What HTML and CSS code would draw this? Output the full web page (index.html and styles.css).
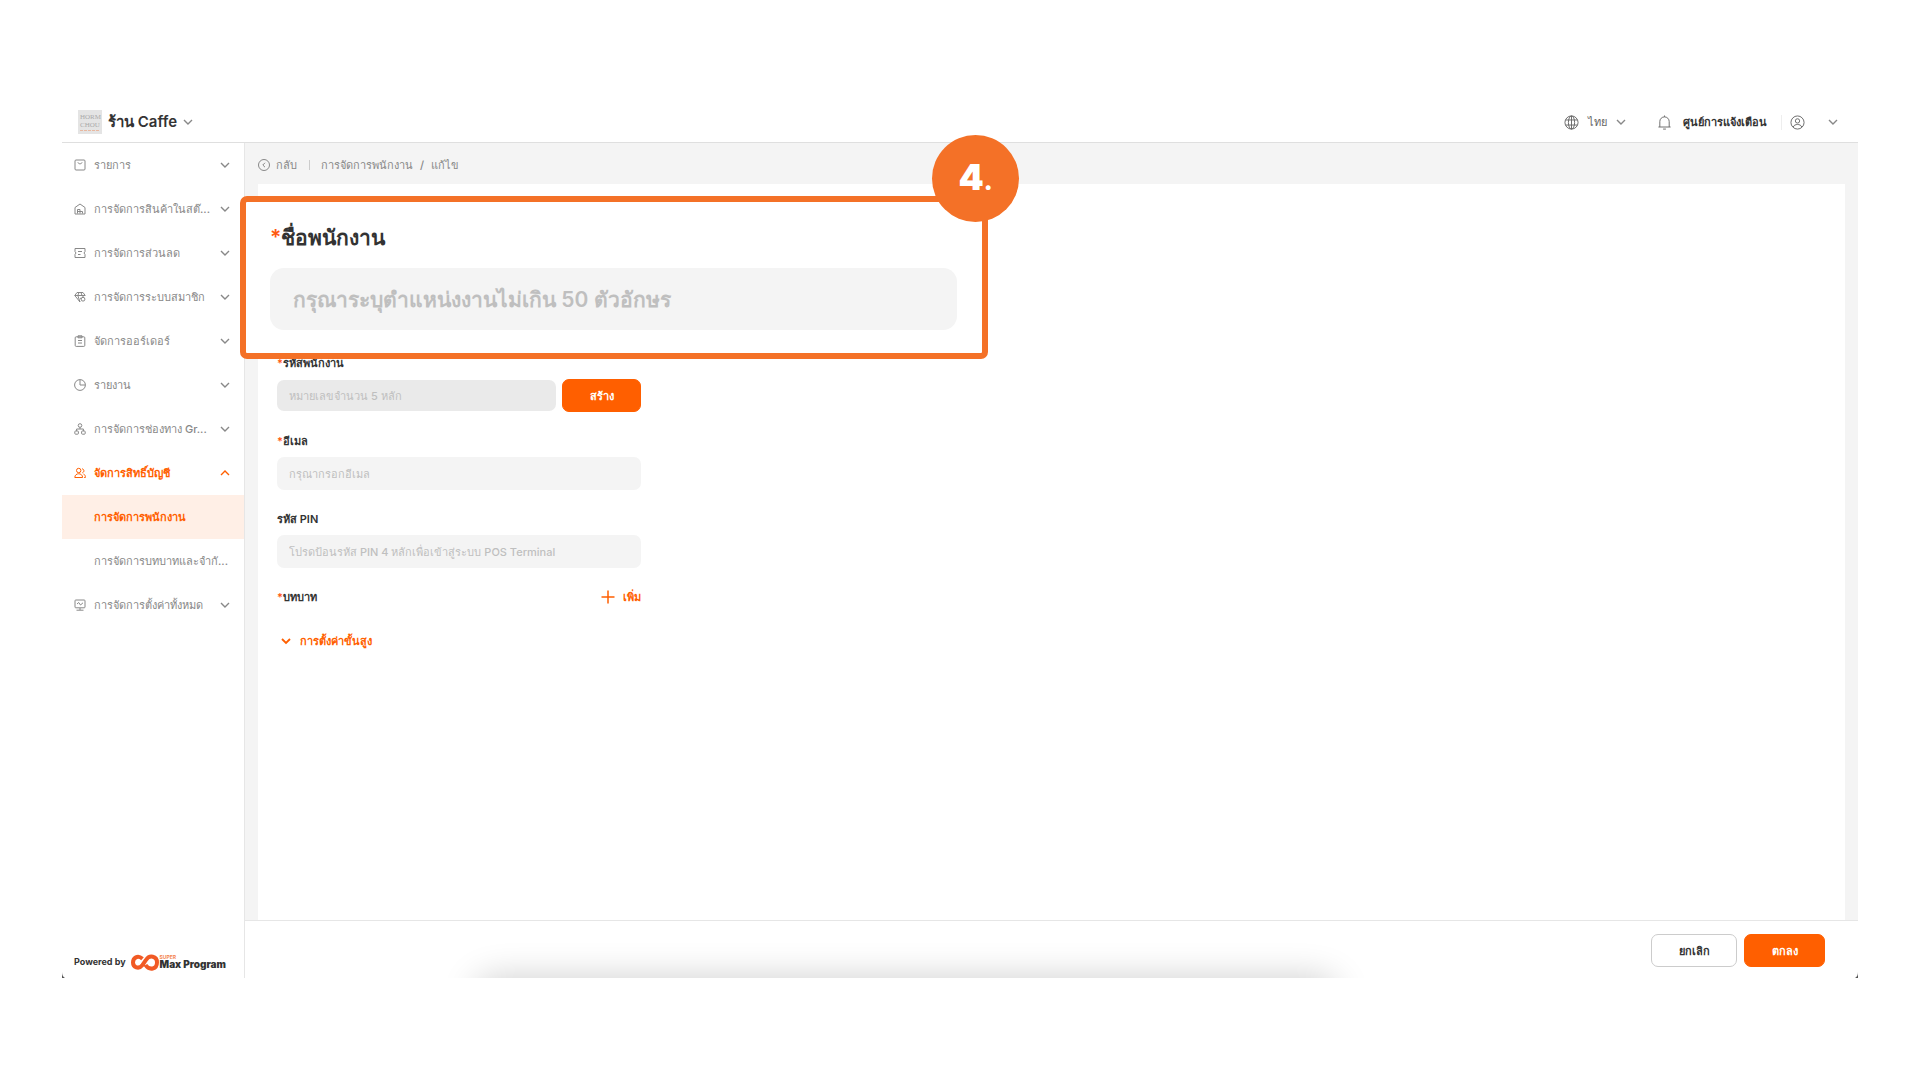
FILE: index.html
```html
<!DOCTYPE html>
<html lang="th">
<head>
    <meta charset="UTF-8">
    <meta name="viewport" content="width=device-width, initial-scale=1.0">
    <title>การจัดการพนักงาน - ร้าน Caffe</title>
    <link rel="stylesheet" href="styles.css">
</head>
<body>
    <!-- Shared icons -->
    <svg class="sprite" aria-hidden="true">
        <symbol id="chevron" viewBox="0 0 10 10"><path d="M1 3l4 4 4-4"/></symbol>
    </svg>

    <div class="window">
        <header class="topbar">
            <button class="shop" type="button">
                <svg class="shop-logo" viewBox="0 0 24 24">
                    <rect width="24" height="24" fill="#e4e4e4" stroke="none"/>
                    <text x="2" y="9">HORM</text>
                    <text x="2" y="17">CHOU</text>
                    <path d="M2 20.500h20" stroke="#e8b8a0" stroke-dasharray="3 1"/>
                </svg>
                <span>ร้าน Caffe</span>
                <svg class="chevron"><use href="#chevron"/></svg>
            </button>
            <div class="tools">
                <button class="tool language" type="button">
                    <svg class="icon-lg" viewBox="0 0 16 16"><circle cx="8" cy="8" r="7"/><ellipse cx="8" cy="8" rx="3.300" ry="7"/><path d="M1.900 5.300h12.200M1.900 10.700h12.200M8 1v14"/></svg>
                    <span>ไทย</span>
                    <svg class="chevron"><use href="#chevron"/></svg>
                </button>
                <button class="tool alerts" type="button">
                    <svg class="icon-lg" viewBox="0 0 16 16"><path d="M1.500 12.800h13M3 12.800V7a5 5 0 0 1 10 0v5.800M8 2V.5M6.500 15h3"/></svg>
                    <span>ศูนย์การแจ้งเตือน</span>
                </button>
                <button class="tool account" type="button" aria-label="บัญชี">
                    <svg class="icon-lg" viewBox="0 0 16 16"><circle cx="8" cy="8" r="7"/><circle cx="8" cy="6.300" r="2.300"/><path d="M3.500 12.800c1-3.600 8-3.600 9 0"/></svg>
                    <svg class="chevron"><use href="#chevron"/></svg>
                </button>
            </div>
        </header>

        <div class="body">
            <aside class="sidebar">
                <nav class="menu">
                    <button class="menu-item" type="button">
                        <svg class="icon" viewBox="0 0 12 12"><rect x="1" y="1" width="10" height="10" rx="1"/><path d="M4 3.300c0 2 4 2 4 0"/></svg>
                        <span>รายการ</span>
                        <svg class="chevron"><use href="#chevron"/></svg>
                    </button>
                    <button class="menu-item" type="button">
                        <svg class="icon" viewBox="0 0 12 12"><path d="M1 11V4.500L6 1l5 3.500V11zM3.500 10.500V6.500H6v2h2.500v2M3.500 8.500H6v2"/></svg>
                        <span>การจัดการสินค้าในสต๊...</span>
                        <svg class="chevron"><use href="#chevron"/></svg>
                    </button>
                    <button class="menu-item" type="button">
                        <svg class="icon" viewBox="0 0 12 12"><path d="M1 1.500h10v3L10 6l1 1.500v3H1v-3L2 6 1 4.500zM4 4.500h4M4 7.500h2.500"/></svg>
                        <span>การจัดการส่วนลด</span>
                        <svg class="chevron"><use href="#chevron"/></svg>
                    </button>
                    <button class="menu-item" type="button">
                        <svg class="icon" viewBox="0 0 12 12"><path d="M6 11L.8 4.500 3 1.500h6l2.200 3M.8 4.500h10.400M6 11L3.800 4.500 5 1.500M7 1.500l1 3"/><circle cx="9" cy="8.200" r="1.900"/><path d="M9 6.300v-1.500M6 7l1.300.8"/></svg>
                        <span>การจัดการระบบสมาชิก</span>
                        <svg class="chevron"><use href="#chevron"/></svg>
                    </button>
                    <button class="menu-item" type="button">
                        <svg class="icon" viewBox="0 0 12 12"><rect x="1.200" y="1.800" width="9.600" height="9.600" rx="1"/><path d="M4 .8h4v2H4zM4 5.500h4M4 8h4"/></svg>
                        <span>จัดการออร์เดอร์</span>
                        <svg class="chevron"><use href="#chevron"/></svg>
                    </button>
                    <button class="menu-item" type="button">
                        <svg class="icon" viewBox="0 0 12 12"><circle cx="6" cy="6" r="5.400"/><path d="M6 1v5h5"/></svg>
                        <span>รายงาน</span>
                        <svg class="chevron"><use href="#chevron"/></svg>
                    </button>
                    <button class="menu-item" type="button">
                        <svg class="icon" viewBox="0 0 12 12"><circle cx="6" cy="2.500" r="1.800"/><rect x=".8" y="8" width="3.600" height="3.200" rx=".8"/><rect x="7.600" y="8" width="3.600" height="3.200" rx=".8"/><path d="M6 4.200V6M2.600 8V6h6.800v2"/></svg>
                        <span>การจัดการช่องทาง Gr...</span>
                        <svg class="chevron"><use href="#chevron"/></svg>
                    </button>
                    <button class="menu-item open" type="button" aria-expanded="true">
                        <svg class="icon" viewBox="0 0 12 12"><circle cx="4.700" cy="3.500" r="2.200"/><path d="M.8 10.500c0-5 7.800-5 7.800 0zM8 1.800c2.500.3 2.500 3.500.3 4M9.500 7c1.400.6 1.900 1.800 1.900 3.500h-1.200"/></svg>
                        <span>จัดการสิทธิ์บัญชี</span>
                        <svg class="chevron"><use href="#chevron"/></svg>
                    </button>
                    <a class="menu-sub active" href="#staff">การจัดการพนักงาน</a>
                    <a class="menu-sub" href="#roles">การจัดการบทบาทและจำกั...</a>
                    <button class="menu-item" type="button">
                        <svg class="icon" viewBox="0 0 12 12"><rect x="1" y="1" width="10" height="7.800" rx=".8"/><path d="M3 5l1.700-1.500L6.500 6 9 3.800M6 9v2M2.500 11.200h7"/></svg>
                        <span>การจัดการตั้งค่าทั้งหมด</span>
                        <svg class="chevron"><use href="#chevron"/></svg>
                    </button>
                </nav>
                <div class="powered">
                    <span>Powered by</span>
                    <svg class="brand-mark" viewBox="0 0 28 17"><path d="M11.500 4.800C6.500.5 2 4 2 8.500s5.500 7.500 9.500 2.500l3.500-5c3.500-5.500 11-4 11 2.500s-7.500 8.500-11.500 2.500"/></svg>
                    <span class="brand"><small>SUPER</small><b>Max Program</b></span>
                </div>
            </aside>

            <main class="main">
                <div class="crumbs">
                    <a class="back" href="#back">
                        <svg class="icon" viewBox="0 0 12 12"><circle cx="6" cy="6" r="5.500"/><path d="M7 3.800L4.800 6 7 8.200"/></svg>
                        กลับ
                    </a>
                    <a class="crumb" href="#staff">การจัดการพนักงาน</a>
                    <span>/</span>
                    <span>แก้ไข</span>
                </div>

                <section class="panel">
                    <form class="form" id="staff-form">
                        <div class="field">
                            <label for="code"><i>*</i>รหัสพนักงาน</label>
                            <div class="code-row">
                                <input id="code" type="text" placeholder="หมายเลขจำนวน 5 หลัก" disabled>
                                <button class="btn primary" type="button">สร้าง</button>
                            </div>
                        </div>
                        <div class="field">
                            <label for="email"><i>*</i>อีเมล</label>
                            <input id="email" type="email" placeholder="กรุณากรอกอีเมล">
                        </div>
                        <div class="field">
                            <label for="pin">รหัส PIN</label>
                            <input id="pin" type="text" placeholder="โปรดป้อนรหัส PIN 4 หลักเพื่อเข้าสู่ระบบ POS Terminal">
                        </div>
                        <div class="role-row">
                            <span class="role-label"><i>*</i>บทบาท</span>
                            <button class="link-btn add" type="button">
                                <svg viewBox="0 0 14 14"><path d="M7 .5v13M.5 7h13"/></svg>
                                เพิ่ม
                            </button>
                        </div>
                        <button class="link-btn advanced" type="button">
                            <svg class="chevron"><use href="#chevron"/></svg>
                            การตั้งค่าขั้นสูง
                        </button>
                    </form>

                    <!-- Enlarged name field, step 4 of the guide -->
                    <div class="callout">
                        <label for="name"><i>*</i>ชื่อพนักงาน</label>
                        <input id="name" type="text" form="staff-form" placeholder="กรุณาระบุตำแหน่งงานไม่เกิน 50 ตัวอักษร">
                        <div class="step">4<span>.</span></div>
                    </div>
                </section>

                <footer class="actions">
                    <button class="btn" type="button">ยกเลิก</button>
                    <button class="btn primary" type="submit" form="staff-form">ตกลง</button>
                </footer>
            </main>
        </div>
        <div class="dock-shadow"></div>
        <svg class="corner" viewBox="0 0 4 8"><path d="M0 2c0 3 1 5 3 6H0z"/></svg>
        <svg class="corner right" viewBox="0 0 4 8"><path d="M0 2c0 3 1 5 3 6H0z"/></svg>
    </div>
</body>
</html>
```
FILE: styles.css
```css
* {
    box-sizing: border-box;
}

body {
    margin: 0;
    min-height: 100vh;
    padding: 102px 62px;
    display: flex;
    background: #fff;
    color: #333;
    font-family: Inter, "Liberation Serif", serif;
    font-size: 11px;
    line-height: 20px;
}

button,
input {
    font: inherit;
    color: inherit;
}

button {
    border: 0;
    padding: 0;
    background: none;
    cursor: pointer;
}

a {
    color: inherit;
    text-decoration: none;
}

i {
    color: #ff5a10;
    font-style: normal;
}

svg {
    fill: none;
    stroke: currentColor;
    flex-shrink: 0;
}

.sprite {
    position: absolute;
    width: 0;
    height: 0;
}

.chevron {
    width: 10px;
    height: 10px;
    stroke-width: 1.4;
}

.icon {
    width: 12px;
    height: 12px;
    stroke-width: 1;
}

.icon-lg {
    width: 15px;
    height: 15px;
}

.window {
    position: relative;
    flex: 1;
    min-width: 0;
    display: flex;
    flex-direction: column;
    overflow: hidden;
}

/* Top bar */
.topbar {
    height: 41px;
    display: flex;
    align-items: center;
    justify-content: space-between;
    padding: 0 20px 0 16px;
    border-bottom: 1px solid #dfdfdf;
}

.shop {
    display: flex;
    align-items: center;
    gap: 6px;
    font-size: 15px;
    font-weight: 600;
}

.shop .chevron,
.tool .chevron {
    color: #888;
}

.shop-logo {
    width: 24px;
    height: 24px;
}

.shop-logo text {
    fill: #aaa;
    stroke: none;
    font: 7px "Liberation Serif", serif;
}

.tools {
    display: flex;
    align-items: center;
}

.tool {
    display: flex;
    align-items: center;
    gap: 9px;
    color: #666;
}

.alerts {
    margin-left: 31px;
    gap: 11px;
    font-weight: 600;
}

.alerts span {
    color: #333;
}

.account {
    margin-left: 14px;
    padding-left: 8px;
    gap: 23px;
    border-left: 1px solid #eee;
}

/* Sidebar */
.body {
    flex: 1;
    display: flex;
    min-height: 0;
}

.sidebar {
    width: 183px;
    display: flex;
    flex-direction: column;
    justify-content: space-between;
    border-right: 1px solid #e6e6e6;
    color: #888;
    font-weight: 500;
}

.menu-item {
    width: 100%;
    height: 44px;
    display: flex;
    align-items: center;
    padding: 0 14px 1px 12px;
    text-align: left;
}

.menu-item span {
    margin: 0 auto 0 8px;
    white-space: nowrap;
}

.menu-item.open {
    color: #ff5f00;
    font-weight: 600;
}

.open .chevron {
    transform: rotate(180deg);
}

.menu-sub {
    display: flex;
    align-items: center;
    height: 44px;
    padding: 0 0 1px 32px;
    white-space: nowrap;
}

.menu-sub.active {
    background: #ffefe6;
    color: #ff5f00;
    font-weight: 600;
}

.powered {
    display: flex;
    align-items: center;
    padding: 0 12px 6px;
    color: #333;
    font-size: 9px;
    font-weight: 700;
    white-space: nowrap;
}

.brand-mark {
    width: 28px;
    height: 17px;
    margin-left: 5px;
    color: #f15a24;
    stroke-width: 4;
}

.brand {
    display: flex;
    flex-direction: column;
    margin-left: 1px;
    font-size: 10px;
    line-height: 9px;
}

.brand b {
    font-weight: 900;
}

.brand small {
    color: #f4844f;
    font-size: 5px;
    line-height: 5px;
}

/* Main area */
.main {
    flex: 1;
    min-width: 0;
    display: flex;
    flex-direction: column;
    background: #f4f4f4;
}

.crumbs {
    height: 41px;
    display: flex;
    align-items: center;
    gap: 7px;
    padding: 2px 13px 0;
    color: #888;
    font-weight: 500;
}

.back {
    display: flex;
    align-items: center;
    gap: 6px;
}

.crumb {
    margin-left: 5px;
    padding-left: 12px;
    background: linear-gradient(#ccc, #ccc) left center / 1px 10px no-repeat;
}

.panel {
    position: relative;
    flex: 1;
    margin: 0 13px;
    background: #fff;
}

.form {
    width: 383px;
    padding: 169px 0 0 19px;
}

.field {
    margin-bottom: 19px;
}

.field label,
.role-label {
    display: block;
    margin-bottom: 6px;
    font-weight: 600;
}

.field input,
.callout input {
    display: block;
    width: 100%;
    height: 33px;
    padding: 0 12px;
    border: 0;
    border-radius: 7px;
    background: #f4f4f4;
    font-weight: 500;
}

input::placeholder {
    color: #bfbfbf;
    opacity: 1;
}

.code-row {
    display: flex;
    align-items: center;
    gap: 6px;
}

.field .code-row input {
    flex: 1;
    min-width: 0;
    height: 31px;
    background: #eaeaea;
}

.code-row .btn {
    width: 79px;
}

.btn {
    height: 33px;
    border: 1px solid #ccc;
    border-radius: 7px;
    background: #fff;
    font-weight: 600;
}

.btn.primary {
    border-color: #ff5f00;
    background: #ff5f00;
    color: #fff;
}

.role-row {
    display: flex;
    justify-content: space-between;
}

.link-btn {
    display: flex;
    align-items: center;
    height: 20px;
    color: #ff5f00;
    font-weight: 600;
}

.add {
    gap: 8px;
}

.add svg {
    width: 14px;
    height: 14px;
    stroke-width: 1.5;
}

.advanced {
    margin: 18px 0 0 4px;
    gap: 9px;
}

.advanced .chevron {
    stroke-width: 1.8;
}

.callout {
    position: absolute;
    top: 12px;
    left: -18px;
    width: 748px;
    padding: 20px 25px 23px 24px;
    border: 6px solid #f47127;
    border-radius: 7px;
    background: #fff;
}

.callout label {
    display: block;
    margin-bottom: 14px;
    font-size: 21px;
    font-weight: 600;
    line-height: 32px;
}

.callout input {
    height: 62px;
    padding: 0 23px;
    border-radius: 14px;
    font-size: 21px;
    font-weight: 600;
}

.step {
    position: absolute;
    top: -67px;
    right: -37px;
    width: 87px;
    height: 87px;
    border-radius: 50%;
    background: #f47127;
    color: #fff;
    font-size: 36px;
    font-weight: 900;
    line-height: 84px;
    text-align: center;
}

.step span {
    font-size: 24px;
}

.actions {
    display: flex;
    justify-content: flex-end;
    gap: 7px;
    padding: 13px 33px 11px;
    border-top: 1px solid #e6e6e6;
    background: #fff;
}

.actions .btn {
    width: 81px;
}

.actions .btn:first-child {
    width: 86px;
}

/* Bottom edge of the window */
.dock-shadow {
    position: absolute;
    bottom: -40px;
    left: 23%;
    right: 29%;
    height: 40px;
    border-radius: 20px;
    box-shadow: 0 0 36px rgba(0, 0, 0, 0.2);
}

.corner {
    position: absolute;
    bottom: 0;
    left: 0;
    width: 4px;
    height: 8px;
    fill: #555;
    stroke: none;
}

.corner.right {
    left: auto;
    right: 0;
    transform: scaleX(-1);
}
```
